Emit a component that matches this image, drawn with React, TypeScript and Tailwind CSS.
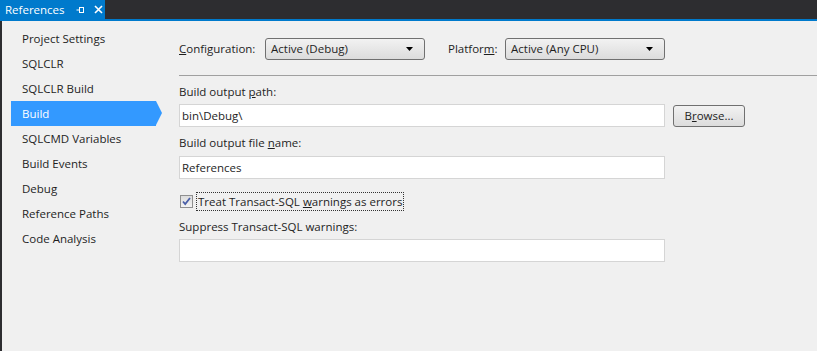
const navItems = [
  "Project Settings",
  "SQLCLR",
  "SQLCLR Build",
  "Build",
  "SQLCMD Variables",
  "Build Events",
  "Debug",
  "Reference Paths",
  "Code Analysis",
];

function Select({ value, width }: { value: string; width: string }) {
  return (
    <div
      className={`${width} h-[22px] flex items-center justify-between rounded-[3px] border border-[#707070] bg-gradient-to-b from-[#f2f2f2] to-[#dcdcdc] pl-[5px] pr-[10px]`}
    >
      <span>{value}</span>
      <svg width="8" height="4" viewBox="0 0 8 4">
        <path d="M0 0h7L3.5 4z" fill="#000" />
      </svg>
    </div>
  );
}

function TextBox({ value }: { value?: string }) {
  return (
    <div className="w-[486px] h-[23px] border border-[#d5d5d5] bg-white flex items-center px-[2px]">
      {value}
    </div>
  );
}

export default function App() {
  return (
    <div
      className="w-[817px] h-[351px] flex flex-col bg-[#2d2d30] text-[11.5px] text-[#1e1e1e] overflow-hidden"
      style={{ fontFamily: '"Open Sans", "Noto Sans", sans-serif' }}
    >
      <div className="h-[19px] flex">
        <div className="w-[105px] h-full bg-[#007acc] text-white flex items-center pl-[5px]">
          <span>References</span>
          <svg className="ml-[11px]" width="10" height="10" viewBox="0 0 10 10">
            <path d="M0.5 5h3M3.5 2v6M3.5 2.5h4.5M3.5 7.5h4.5M7.5 2.5v5" stroke="#fff" strokeWidth="1" fill="none" />
          </svg>
          <svg className="ml-[8px]" width="9" height="9" viewBox="0 0 9 9">
            <path d="M1 1l7 7M8 1l-7 7" stroke="#fff" strokeWidth="1.6" />
          </svg>
        </div>
      </div>
      <div className="h-[2px] bg-[#007acc]" />
      <div className="flex-1 flex pl-[2px]">
        <div className="flex-1 flex bg-[#f0f0f0]">
          <div className="w-[160px] pt-[5px]">
            {navItems.map((item) =>
              item === "Build" ? (
                <div key={item} className="relative ml-[9px] h-[25px]">
                  <div className="w-[145px] h-full bg-[#3399ff] text-white flex items-center pl-[11px]">
                    {item}
                  </div>
                  <div className="absolute left-[145px] top-0 w-0 h-0 border-y-[12.5px] border-y-transparent border-l-[6px] border-l-[#3399ff]" />
                </div>
              ) : (
                <div key={item} className="h-[25px] flex items-center pl-[20px]">
                  {item}
                </div>
              )
            )}
          </div>
          <div className="flex-1 pl-[17px] pt-[17px]">
            <div className="flex items-center h-[22px]">
              <span className="w-[86px]">
                <u>C</u>onfiguration:
              </span>
              <Select value="Active (Debug)" width="w-[160px]" />
              <span className="ml-[23px] w-[57px]">
                Platfor<u>m</u>:
              </span>
              <Select value="Active (Any CPU)" width="w-[160px]" />
            </div>
            <div className="mt-[15px] h-px bg-[#a0a0a0]" />
            <div className="mt-[6px] leading-[20px]">
              Build output <u>p</u>ath:
            </div>
            <div className="mt-[2px] flex items-center gap-[8px]">
              <TextBox value="bin\Debug\" />
              <div className="w-[72px] h-[22px] rounded-[3px] border border-[#707070] bg-gradient-to-b from-[#f2f2f2] to-[#dcdcdc] flex items-center justify-center">
                <span>
                  B<u>r</u>owse...
                </span>
              </div>
            </div>
            <div className="mt-[6px] leading-[20px]">
              Build output file <u>n</u>ame:
            </div>
            <div className="mt-[3px]">
              <TextBox value="References" />
            </div>
            <div className="mt-[13px] flex items-center h-[19px]">
              <div className="ml-[1px] w-[13px] h-[13px] border border-[#8f8f8f] bg-gradient-to-b from-[#dcdcdc] to-[#f4f4f4] flex items-center justify-center">
                <svg width="9" height="9" viewBox="0 0 9 9">
                  <path d="M1 4.5l2.2 2.5L8 1" stroke="#4a5fa8" strokeWidth="1.8" fill="none" />
                </svg>
              </div>
              <div className="ml-[3px] h-[19px] px-[1px] border border-dotted border-[#333] flex items-center">
                <span>
                  Treat Transact-SQL <u>w</u>arnings as errors
                </span>
              </div>
            </div>
            <div className="mt-[6px] leading-[20px]">
              Suppress Transact-SQL warnin<u>g</u>s:
            </div>
            <div className="mt-[2px]">
              <TextBox />
            </div>
          </div>
        </div>
      </div>
    </div>
  );
}
